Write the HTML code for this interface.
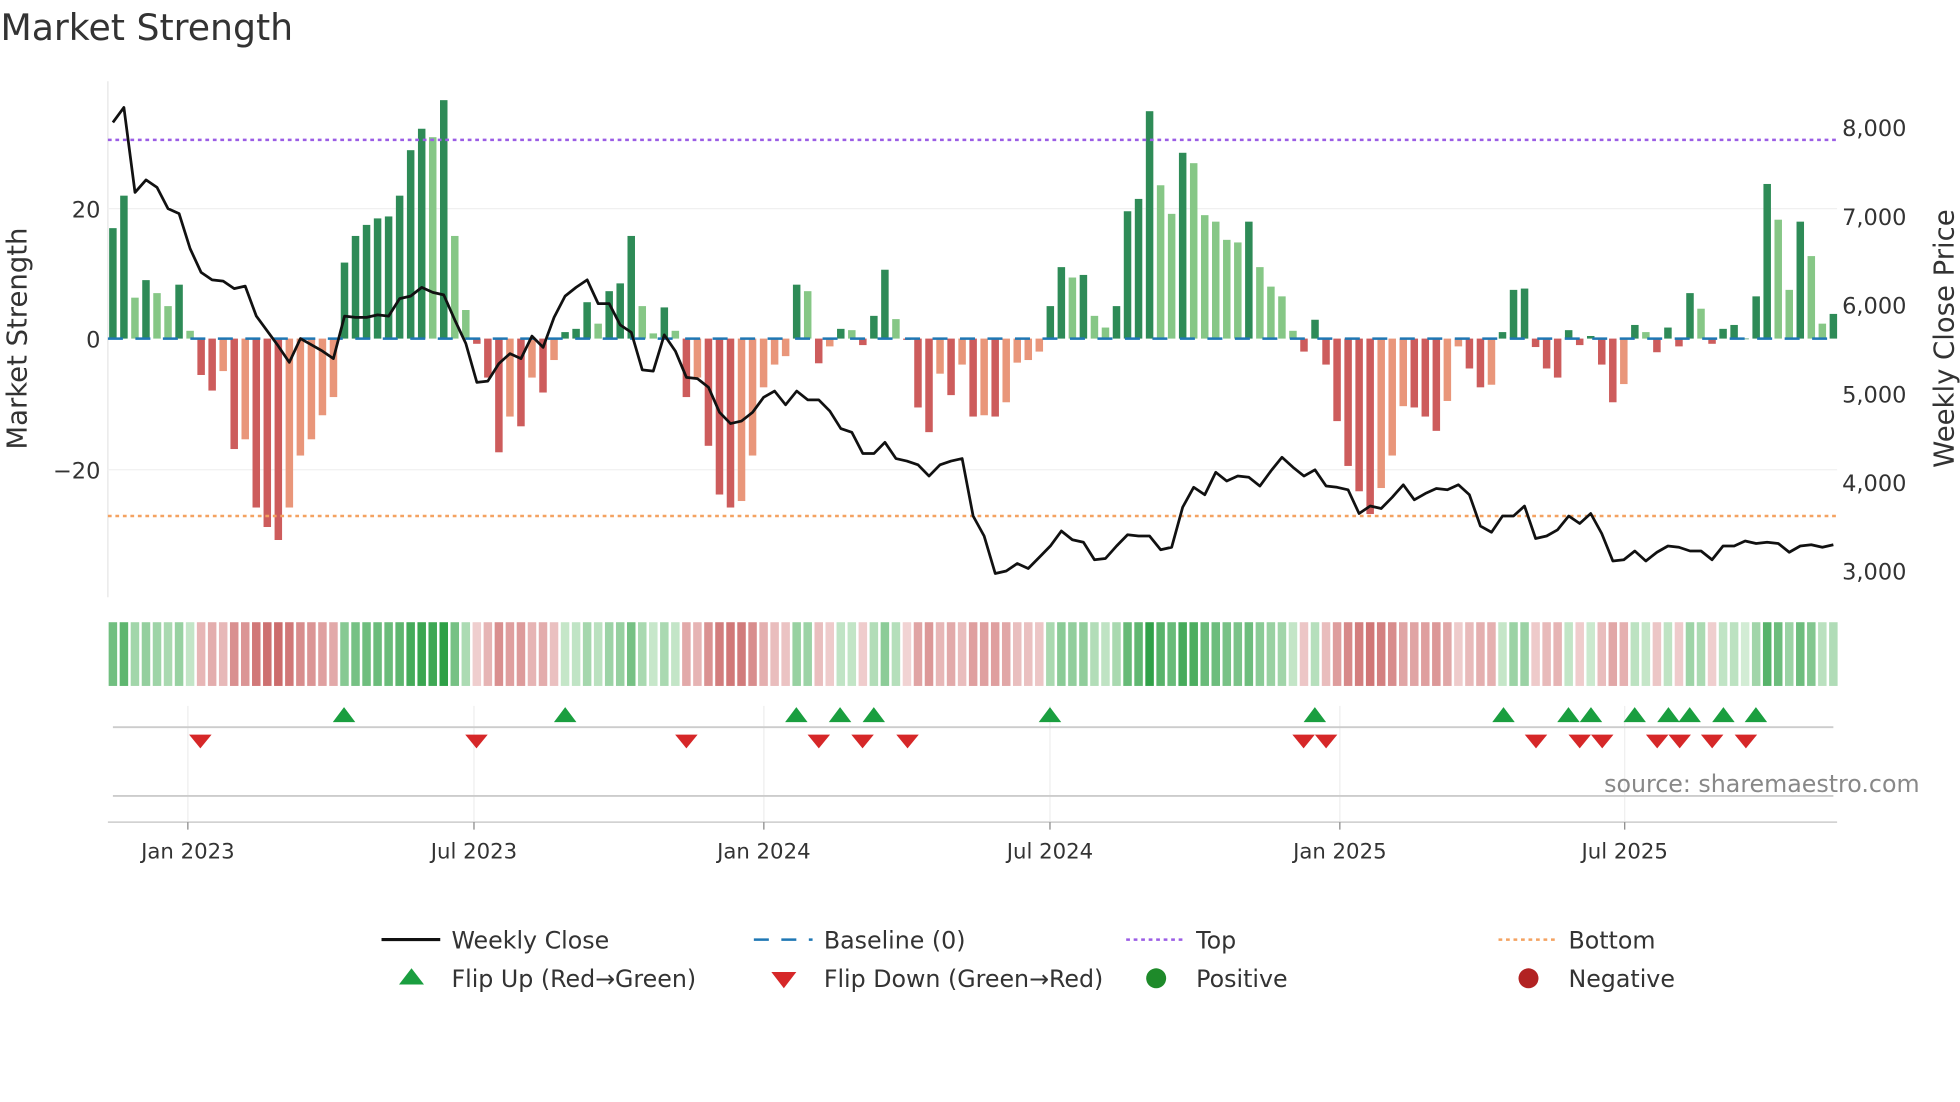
<!DOCTYPE html>
<html><head><meta charset="utf-8"><style>
html,body{margin:0;padding:0;background:#fff;}
svg{display:block;font-family:"DejaVu Sans","Liberation Sans",sans-serif;}
</style></head><body>
<svg id="s" width="1960" height="1102" viewBox="0 0 1568 882" xmlns="http://www.w3.org/2000/svg">
<rect width="1568" height="882" fill="#fff"/>
<text x="0" y="32" font-size="29" fill="#333">Market Strength</text>
<line x1="86" y1="65" x2="86" y2="478" stroke="#e6e6e6"/>
<line x1="86" y1="167" x2="1470" y2="167" stroke="#f0f0f0"/>
<line x1="86" y1="376" x2="1470" y2="376" stroke="#f0f0f0"/>
<g font-size="18" fill="#333" text-anchor="end">
<text x="80" y="174">20</text><text x="80" y="278">0</text><text x="80" y="383">−20</text>
</g>
<g font-size="18" fill="#333">
<text x="1474" y="109">8,000</text><text x="1474" y="180">7,000</text><text x="1474" y="251">6,000</text>
<text x="1474" y="322">5,000</text><text x="1474" y="393">4,000</text><text x="1474" y="464">3,000</text>
</g>
<text transform="translate(21,271) rotate(-90)" font-size="22" fill="#333" text-anchor="middle">Market Strength</text>
<text transform="translate(1563,271) rotate(-90)" font-size="22" fill="#333" text-anchor="middle">Weekly Close Price</text>
<g id="bars"></g>
<g id="heat"></g>
<line x1="86" y1="112" x2="1470" y2="112" stroke="#9b5de5" stroke-width="2" stroke-dasharray="3,3"/>
<line x1="86" y1="413" x2="1470" y2="413" stroke="#f4a261" stroke-width="2" stroke-dasharray="3,3"/>
<polyline id="price" fill="none" stroke="#111" stroke-width="2.2" stroke-linejoin="round"/>
<g stroke="#eee">
<line x1="150" y1="565" x2="150" y2="657"/><line x1="379" y1="565" x2="379" y2="657"/><line x1="611" y1="565" x2="611" y2="657"/>
<line x1="840" y1="565" x2="840" y2="657"/><line x1="1072" y1="565" x2="1072" y2="657"/><line x1="1300" y1="565" x2="1300" y2="657"/>
</g>
<line x1="90" y1="582" x2="1467" y2="582" stroke="#ccc" stroke-width="1.5"/>
<line x1="90" y1="637" x2="1467" y2="637" stroke="#ccc" stroke-width="1.5"/>
<line x1="86" y1="658" x2="1470" y2="658" stroke="#ccc" stroke-width="1.2"/>
<g id="mk"></g>
<g stroke="#888"><line x1="150" y1="658" x2="150" y2="664"/><line x1="379" y1="658" x2="379" y2="664"/><line x1="611" y1="658" x2="611" y2="664"/><line x1="840" y1="658" x2="840" y2="664"/><line x1="1072" y1="658" x2="1072" y2="664"/><line x1="1300" y1="658" x2="1300" y2="664"/></g>
<g font-size="17" fill="#333" text-anchor="middle">
<text x="150" y="687">Jan 2023</text><text x="379" y="687">Jul 2023</text><text x="611" y="687">Jan 2024</text>
<text x="840" y="687">Jul 2024</text><text x="1072" y="687">Jan 2025</text><text x="1300" y="687">Jul 2025</text>
</g>
<text x="1536" y="634" font-size="19" fill="#888" text-anchor="end">source: sharemaestro.com</text>
<g font-size="19" fill="#333">
<line x1="305" y1="752" x2="352" y2="752" stroke="#111" stroke-width="2.5"/><text x="361" y="759">Weekly Close</text>
<line x1="603" y1="752" x2="650" y2="752" stroke="#1f77b4" stroke-width="2" stroke-dasharray="12,10"/><text x="659" y="759">Baseline (0)</text>
<line x1="901" y1="752" x2="948" y2="752" stroke="#9b5de5" stroke-width="2" stroke-dasharray="3,3"/><text x="957" y="759">Top</text>
<line x1="1199" y1="752" x2="1246" y2="752" stroke="#f4a261" stroke-width="2" stroke-dasharray="3,3"/><text x="1255" y="759">Bottom</text>
<polygon points="319,788 329,775 339,788" fill="#1a9e3f"/><text x="361" y="790">Flip Up (Red→Green)</text>
<polygon points="617,778 637,778 627,791" fill="#d62728"/><text x="659" y="790">Flip Down (Green→Red)</text>
<circle cx="925" cy="783" r="8" fill="#1e8a2a"/><text x="957" y="790">Positive</text>
<circle cx="1223" cy="783" r="8" fill="#b22222"/><text x="1255" y="790">Negative</text>
</g>
</svg>
<script>
var v=[17,22,6.3,9,7,5,8.3,1.2,-5.6,-8,-5,-17,-15.5,-26,-29,-31,-26,-18,-15.5,-11.8,-9,11.7,15.8,17.5,18.5,18.8,22,29,32.3,31,36.7,15.8,4.4,-0.8,-6,-17.5,-12,-13.5,-6,-8.3,-3.3,1,1.5,5.6,2.3,7.3,8.5,15.8,5,0.8,4.8,1.2,-9,-6,-16.5,-24,-26,-25,-18,-7.5,-4,-2.7,8.3,7.3,-3.8,-1.2,1.5,1.3,-1,3.5,10.6,3,-0.2,-10.6,-14.4,-5.4,-8.7,-4,-12,-11.8,-12,-9.8,-3.7,-3.3,-2,5,11,9.4,9.8,3.5,1.7,5,19.6,21.5,35,23.6,19.2,28.6,27,19,18,15.2,14.8,18,11,8,6.5,1.2,-2,2.9,-4,-12.7,-19.6,-23.5,-27,-23,-18,-10.4,-10.6,-12,-14.2,-9.6,-1.2,-4.6,-7.5,-7.1,1,7.5,7.7,-1.3,-4.6,-6,1.3,-1,0.4,-4,-9.8,-7,2.1,1,-2.1,1.7,-1.2,7,4.6,-0.8,1.5,2.1,0,6.5,23.8,18.3,7.5,18,12.7,2.3,3.8];
var p=[98,86,154,144,150,167,171,199,218,224,225,231,229,253,265,277,290,271,276,281,287,253,254,254,252,253,239,237,230,234,236,256,275,306,305,291,283,287,269,278,254,237,230,224,243,243,260,266,296,297,268,281,302,303,310,330,339,337,330,318,313,324,313,320,320,329,343,346,363,363,354,367,369,372,381,372,369,367,413,429,459,457,451,455,446,437,425,432,434,448,447,437,428,429,429,440,438,406,390,396,378,385,381,382,389,377,366,374,381,376,389,390,392,411,405,407,398,388,400,395,391,392,388,396,421,426,413,413,405,431,429,424,413,419,411,427,449,448,441,449,442,437,438,441,441,448,437,437,433,435,434,435,442,437,436,438,436];
var n=v.length,x0=90,dx=(1467-90)/(n-1),NS="http://www.w3.org/2000/svg";
function el(t,a,g){var e=document.createElementNS(NS,t);for(var k in a)e.setAttribute(k,a[k]);document.getElementById(g).appendChild(e);return e;}
function mix(a,b,t){var r=[];for(var i=0;i<3;i++)r.push(Math.round(a[i]+(b[i]-a[i])*t));return "rgb("+r.join(",")+")";}
for(var i=0;i<n;i++){
 var x=x0+i*dx,val=v[i],prev=i?v[i-1]:0,y0=271,h=Math.abs(val)*5.2;
 var inc=Math.abs(val)>=Math.abs(prev)||(val*prev<=0);
 var c=val>=0?(inc?"#2e8b57":"#86c786"):(inc?"#cd5c5c":"#e9967a");
 el("rect",{x:x-3,y:val>=0?y0-h:y0,width:6,height:Math.max(h,0.5),fill:c},"bars");
 var t=Math.min(Math.abs(val)/36,1);
 var hc=val>=0?mix([210,236,212],[46,160,70],Math.pow(t,0.7)):mix([242,214,214],[200,96,96],Math.pow(t,0.7));
 el("rect",{x:x-3.4,y:498,width:6.8,height:51,fill:hc},"heat");
}
el("line",{x1:86,y1:271,x2:1470,y2:271,stroke:"#1f77b4","stroke-width":2,"stroke-dasharray":"12,10"},"bars");
var pts=[];for(var i=0;i<n;i++)pts.push((x0+i*dx).toFixed(1)+","+p[i]);
document.getElementById("price").setAttribute("points",pts.join(" "));
[275,452,637,672,699,840,1052,1203,1255,1273,1308,1335,1352,1379,1405].forEach(function(x){el("polygon",{points:(x-9)+",578 "+x+",566 "+(x+9)+",578",fill:"#1a9e3f"},"mk");});
[160,381,549,655,690,726,1043,1061,1229,1264,1282,1326,1344,1370,1397].forEach(function(x){el("polygon",{points:(x-9)+",588 "+(x+9)+",588 "+x+",599",fill:"#d62728"},"mk");});
</script>
</body></html>
